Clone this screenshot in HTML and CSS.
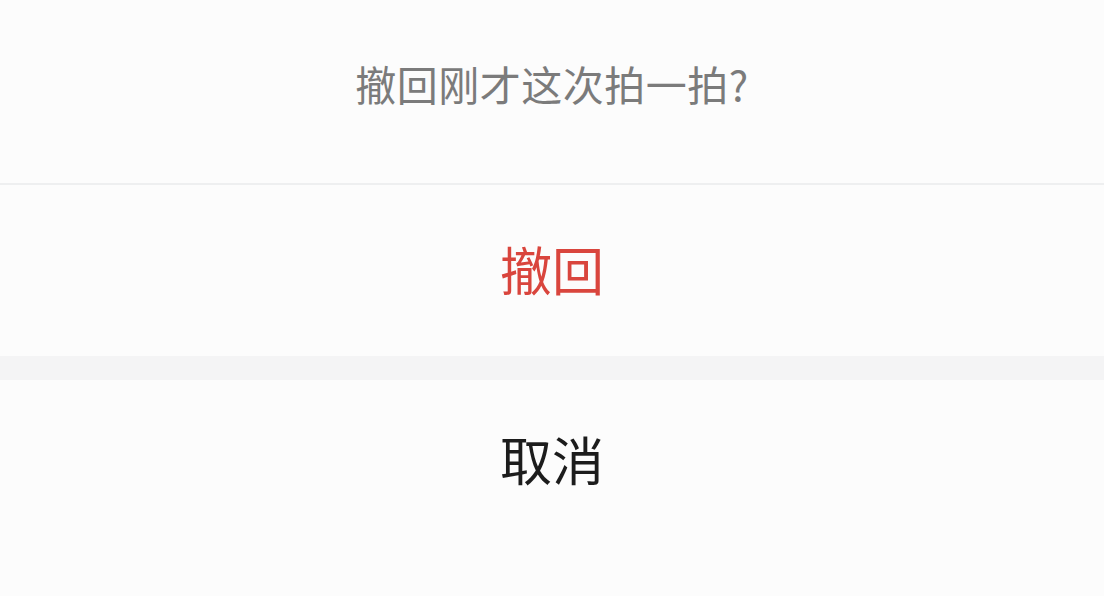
FILE: index.html
```html
<!DOCTYPE html>
<html lang="zh-CN">
<head>
  <meta charset="UTF-8">
  <title>拍一拍</title>
  <link rel="stylesheet" href="styles.css">
</head>
<body>
  <div class="action-sheet">
    <div class="sheet-group">
      <div class="sheet-title">撤回刚才这次拍一拍?</div>
      <button class="sheet-item danger">撤回</button>
    </div>
    <div class="sheet-gap"></div>
    <button class="sheet-item cancel">取消</button>
  </div>
</body>
</html>
```
FILE: styles.css
```css
body {
  margin: 0;
  background-color: #fcfcfc;
  font-family: "Noto Sans CJK SC", "Noto Sans", sans-serif;
}

.action-sheet {
  display: flex;
  flex-direction: column;
  height: 596px;
}

.sheet-group {
  display: flex;
  flex-direction: column;
}

.sheet-title {
  height: 185px;
  box-sizing: border-box;
  padding-bottom: 17px;
  display: flex;
  align-items: center;
  justify-content: center;
  font-size: 41px;
  letter-spacing: 0.5px;
  color: #7b7b7b;
  border-bottom: 2px solid #eeeff0;
}

.sheet-item {
  display: flex;
  align-items: center;
  justify-content: center;
  width: 100%;
  border: none;
  background-color: #fcfcfc;
  font-family: inherit;
  font-size: 52px;
  cursor: pointer;
}

.danger {
  height: 171px;
  padding-bottom: 6px;
  color: #d9453d;
}

.sheet-gap {
  height: 24px;
  background-color: #f4f4f5;
}

.cancel {
  flex: 1;
  padding-bottom: 60px;
  color: #1c1c1c;
}
```
